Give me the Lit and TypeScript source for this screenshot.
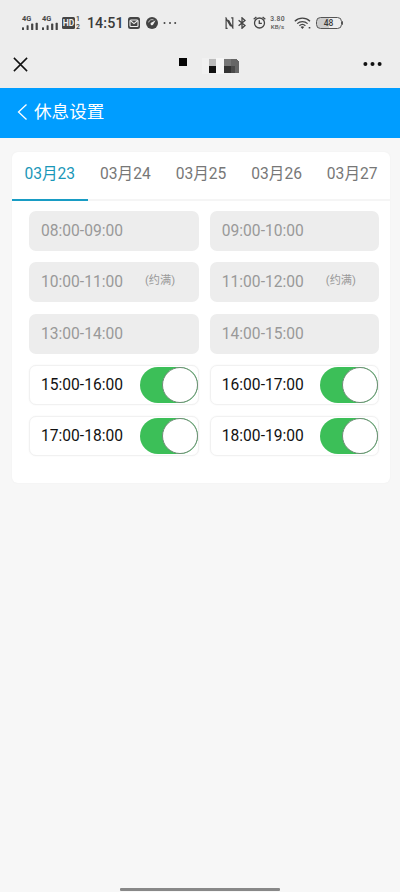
import { LitElement, html, css, nothing } from "lit";
import { customElement, property, state } from "lit/decorators.js";
import { classMap } from "lit/directives/class-map.js";

interface Slot {
  time: string;
  open: boolean;
  full?: boolean;
}

@customElement("signal-bars")
class SignalBars extends LitElement {
  static styles = css`
    :host { display: flex; flex-direction: column; width: 16px; height: 15px; color: #444; }
    .gen { font: 700 7.4px/7px Roboto, sans-serif; height: 7px; }
    svg { display: block; }
  `;
  render() {
    return html`
      <span class="gen">4G</span>
      <svg width="16" height="8" viewBox="0 0 16 8" fill="currentColor">
        <rect x="0" y="5.2" width="2" height="2.8" rx=".6" />
        <rect x="4.6" y="3.2" width="2" height="4.8" rx=".6" />
        <rect x="9.1" y="1.6" width="2.2" height="6.4" rx=".6" />
        <rect x="13.6" y="0.8" width="2.2" height="7.2" rx=".6" />
      </svg>
    `;
  }
}

@customElement("status-bar")
class StatusBar extends LitElement {
  static styles = css`
    :host { display: flex; align-items: center; box-sizing: border-box; height: 40px; padding: 5px 57px 0 22px; color: #3a3a3a; font-family: Roboto, sans-serif; }
    .left, .right { display: flex; align-items: center; }
    .right { margin-left: auto; }
    svg { display: block; flex: none; }
    signal-bars + signal-bars { margin-left: 4px; }
    .hd { margin-left: 4px; width: 13px; height: 12px; border-radius: 1.5px; background: #444; color: #eee; font: 700 8.5px/12px Roboto, sans-serif; text-align: center; }
    .sim { display: flex; flex-direction: column; margin-left: 1px; font: 500 6.8px/8px Roboto, sans-serif; }
    .clock { margin-left: 7px; width: 36px; font-size: 14.3px; font-weight: 500; letter-spacing: 0.1px; line-height: 16px; white-space: nowrap; }
    .mail { margin-left: 5px; }
    .disc { margin-left: 6px; }
    .more { margin-left: 5px; }
    .bluetooth { margin-left: 4px; }
    .alarm { margin-left: 7px; }
    .speed { display: flex; flex-direction: column; align-items: center; width: 16px; margin-left: 4px; font-size: 6.8px; font-weight: 500; line-height: 8px; letter-spacing: 0.3px; color: #555; }
    .speed .unit { font-size: 6.2px; letter-spacing: 0; }
    .wifi { margin-left: 8px; }
    .battery { display: flex; align-items: center; margin-left: 4px; }
    .cell { box-sizing: border-box; width: 26px; height: 12px; border: 1px solid #555; border-radius: 4.5px; background: linear-gradient(90deg, #ccc 50%, #eee 50%); font: 500 8.5px/10px Roboto, sans-serif; text-align: center; }
    .cap { width: 1.5px; height: 4px; background: #555; border-radius: 0 1px 1px 0; }
  `;
  render() {
    return html`
      <div class="left">
        <signal-bars></signal-bars>
        <signal-bars></signal-bars>
        <span class="hd">HD</span>
        <span class="sim"><span>1</span><span>2</span></span>
        <span class="clock">14:51</span>
        <svg class="mail" width="12" height="12" viewBox="0 0 12 12">
          <rect width="12" height="12" rx="2.5" fill="#444" />
          <rect x="2" y="3" width="8" height="6.5" rx="1" fill="none" stroke="#eee" stroke-width="1.1" />
          <path d="M2.5 3.8 6 6.6l3.5-2.8" fill="none" stroke="#eee" stroke-width="1.1" />
        </svg>
        <svg class="disc" width="12" height="12" viewBox="0 0 12 12">
          <circle cx="6" cy="6" r="6" fill="#444" />
          <path d="M7.6 2.9A3.6 3.6 0 0 0 2.6 5.4" fill="none" stroke="#ccc" stroke-width=".9" />
          <path d="M9.6 3.2 7.2 7.4a1.4 1.4 0 1 1-1.6-2Z" fill="#eee" />
        </svg>
        <svg class="more" width="14" height="4" viewBox="0 0 14 4" fill="#444">
          <circle cx="1.5" cy="2" r="1" /><circle cx="7" cy="2" r="1" /><circle cx="12.2" cy="2" r="1" />
        </svg>
      </div>
      <div class="right">
        <svg width="9" height="12" viewBox="0 0 9 12" fill="none" stroke="#444" stroke-width="1.2">
          <path d="M2.6 11.3H1.1V1.2L5.6 9.2M3.4 3l4.4 7.8V.8H6.2" />
        </svg>
        <svg class="bluetooth" width="8" height="12" viewBox="0 0 8 12" fill="none" stroke="#444" stroke-width="1.3">
          <path d="M.6 3.2 7 8.6 4 11.3V.8l3 2.6L.6 8.8" />
        </svg>
        <svg class="alarm" width="13" height="13" viewBox="0 0 13 13" fill="none" stroke="#444" stroke-width="1.3">
          <circle cx="6.5" cy="7" r="5" /><path d="M6.3 4.2v3.2h2.6M.7 3.2 3.4.9M12.3 3.2 9.6.9" />
        </svg>
        <span class="speed"><span>3.80</span><span class="unit">KB/s</span></span>
        <svg class="wifi" width="18" height="12" viewBox="0 0 18 12" fill="none" stroke="#444" stroke-width="1.3">
          <path d="M.8 4.2a11 11 0 0 1 15.2 0M3.2 6.6a7.6 7.6 0 0 1 10.4 0M5.4 8.8a4.4 4.4 0 0 1 6 0" />
          <path d="M6.6 10 8.4 12l1.8-2a2.6 2.6 0 0 0-3.6 0ZM14.7 10h1.6v1.4h-1.6Z" fill="#444" stroke="none" />
        </svg>
        <span class="battery"><span class="cell">48</span><span class="cap"></span></span>
      </div>
    `;
  }
}

@customElement("toggle-switch")
class ToggleSwitch extends LitElement {
  @property({ type: Boolean, reflect: true }) checked = false;
  static styles = css`
    :host { display: flex; box-sizing: border-box; width: 58px; height: 36px; border-radius: 18px; background: #ccc; cursor: pointer; }
    :host([checked]) { justify-content: flex-end; background: #3cbf58; }
    .knob { box-sizing: border-box; width: 36px; height: 36px; border: 1px solid #6f8d76; border-radius: 50%; background: #fff; }
  `;
  render() {
    return html`<span class="knob"></span>`;
  }
}

@customElement("app-root")
class AppRoot extends LitElement {
  @state() private day = 0;
  @state() private slots: Slot[] = [
    { time: "08:00-09:00", open: false },
    { time: "09:00-10:00", open: false },
    { time: "10:00-11:00", open: false, full: true },
    { time: "11:00-12:00", open: false, full: true },
    { time: "13:00-14:00", open: false },
    { time: "14:00-15:00", open: false },
    { time: "15:00-16:00", open: true },
    { time: "16:00-17:00", open: true },
    { time: "17:00-18:00", open: true },
    { time: "18:00-19:00", open: true },
  ];
  private days = ["03月23", "03月24", "03月25", "03月26", "03月27"];

  static styles = css`
    :host { display: flex; flex-direction: column; height: 892px; overflow: hidden; background: #f7f7f7; font-family: Roboto, "Noto Sans CJK SC", sans-serif; }
    .top { height: 88px; background: #ededed; flex: none; }
    .nav { display: flex; align-items: center; height: 48px; padding: 0 18px 0 13px; }
    .nav svg { display: block; }
    .title { margin: 4px 0 0 151px; }
    .dots { margin-left: auto; }
    .header { display: flex; align-items: center; flex: none; box-sizing: border-box; height: 50px; padding: 0 0 3px 17px; background: #009dff; color: #fff; font-size: 17.6px; line-height: 24px; }
    .header svg { margin-right: 6px; }
    .card { margin: 14px 10px 0 12px; height: 331px; border-radius: 6px; background: #fff; overflow: hidden; flex: none; box-shadow: 0 0 2px #eee; }
    .tabs { display: grid; grid-template-columns: repeat(5, 1fr); box-sizing: border-box; height: 49px; border-bottom: 2px solid #f5f5f5; }
    .tab { box-sizing: border-box; height: 49px; padding-top: 10px; border-bottom: 2px solid transparent; color: #777; font-size: 15.6px; line-height: 24px; text-align: center; white-space: nowrap; }
    .tab.on { color: #1a97b8; border-bottom-color: #189cc4; }
    .slots { display: grid; grid-template-columns: 170px 169px; column-gap: 10.8px; row-gap: 11.3px; padding: 10px 0 0 17px; }
    .slot { display: flex; align-items: center; box-sizing: border-box; height: 40px; padding-left: 12px; border-radius: 7px; background: #ededed; color: #999; font-size: 15.6px; line-height: 20px; white-space: nowrap; }
    .slot.open { background: #fff; border: 1px solid #f1f1f1; padding-left: 11px; color: #111; box-shadow: 0 0 2px #f3f3f3; }
    .time { width: 82px; }
    .full { margin: -2px 0 0 22px; font-size: 11.2px; }
    toggle-switch { margin-left: 17px; }
    .slot:nth-child(even) toggle-switch { margin-left: 16px; }
    .home { align-self: center; width: 160px; height: 3px; margin: auto 0 1px; background: #888; border-radius: 1px; flex: none; }
  `;

  private flip(index: number) {
    this.slots = this.slots.map((s, i) => (i === index ? { ...s, open: !s.open } : s));
  }

  render() {
    return html`
      <div class="top">
        <status-bar></status-bar>
        <div class="nav">
          <svg width="15" height="15" viewBox="0 0 15 15" fill="none" stroke="#111" stroke-width="1.5"><path d="M.9.9l13.2 13.2M14.1.9.9 14.1" /></svg>
          <svg class="title" width="61" height="16" viewBox="0 0 61 16" shape-rendering="crispEdges">
            <rect x="0" y="0" width="8" height="8" fill="#050505" />
            <rect x="23" y="0" width="7" height="16" fill="#f1f1f1" />
            <rect x="30" y="1" width="7" height="7" fill="#bbb" />
            <rect x="30" y="8" width="7" height="7" fill="#111" />
            <rect x="37" y="0" width="8" height="16" fill="#f6f6f6" />
            <path d="M45 1h12l3 3v11H45Z" fill="#666" />
            <rect x="45" y="1" width="7" height="7" fill="#777" />
            <rect x="45" y="8" width="7" height="7" fill="#333" />
            <rect x="52" y="8" width="4" height="7" fill="#4a4a4a" />
          </svg>
          <svg class="dots" width="19" height="6" viewBox="0 0 19 6" fill="#111"><circle cx="2.4" cy="3" r="2" /><circle cx="9.5" cy="3" r="2" /><circle cx="16.6" cy="3" r="2" /></svg>
        </div>
      </div>
      <div class="header">
        <svg width="11" height="18" viewBox="0 0 11 18" fill="none" stroke="#fff" stroke-width="1.3"><path d="M9.5 1.5 1.5 9l8 7.5" /></svg>
        <span>休息设置</span>
      </div>
      <div class="card">
        <div class="tabs">
          ${this.days.map((d, i) => html`<div class=${classMap({ tab: true, on: i === this.day })} @click=${() => (this.day = i)}>${d}</div>`)}
        </div>
        <div class="slots">
          ${this.slots.map(
            (s, i) => html`<div class=${classMap({ slot: true, open: s.open })}>
              <span class="time">${s.time}</span>
              ${s.full ? html`<span class="full">(约满)</span>` : nothing}
              ${s.open ? html`<toggle-switch checked @click=${() => this.flip(i)}></toggle-switch>` : nothing}
            </div>`
          )}
        </div>
      </div>
      <div class="home"></div>
    `;
  }
}
